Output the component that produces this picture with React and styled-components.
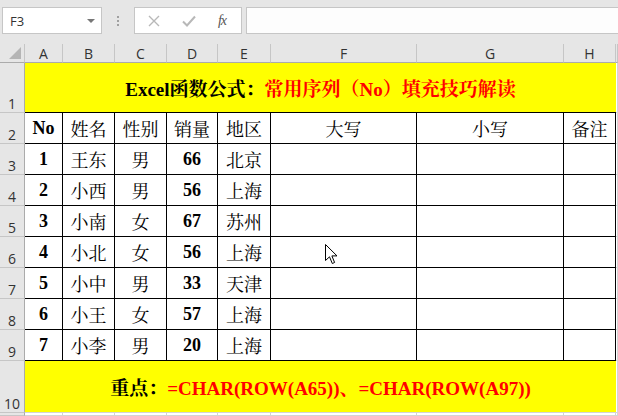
import React from "react";
import styled, { createGlobalStyle } from "styled-components";

const GlobalStyle = createGlobalStyle`
  html, body {
    margin: 0;
    padding: 0;
    background: #e6e6e6;
    overflow: hidden;
  }
`;

const SERIF = `"Liberation Serif", "Noto Serif CJK SC", "Noto Sans CJK SC", serif`;
const UI = `"Open Sans", "Noto Sans", "Liberation Sans", sans-serif`;

const Page = styled.div`
  position: relative;
  width: 618px;
  height: 416px;
  overflow: hidden;
  background: #e6e6e6;
`;

const Toolbar = styled.div`
  display: flex;
  align-items: flex-start;
  height: 44px;
  padding: 7px 0 0 2px;
  box-sizing: border-box;
`;

const NameBox = styled.div`
  width: 100px;
  height: 27px;
  box-sizing: border-box;
  background: #fff;
  border: 1px solid #c6c6c6;
  display: flex;
  align-items: center;
  justify-content: space-between;
  padding: 0 6px 0 7px;
  font-family: ${UI};
  font-size: 13px;
  color: #333;
`;

const DropArrow = styled.span`
  width: 0;
  height: 0;
  border-left: 4px solid transparent;
  border-right: 4px solid transparent;
  border-top: 4px solid #777;
`;

const Grip = styled.div`
  width: 32px;
  height: 27px;
  display: flex;
  flex-direction: column;
  align-items: center;
  justify-content: center;
  gap: 2px;

  span {
    width: 2px;
    height: 2px;
    background: #a0a0a0;
  }
`;

const FnBox = styled.div`
  width: 108px;
  height: 27px;
  box-sizing: border-box;
  background: #fff;
  border: 1px solid #c6c6c6;
  display: flex;
  align-items: center;
  justify-content: space-around;
  padding: 0 4px 0 2px;
`;

const FxText = styled.span`
  font-family: ${SERIF};
  font-style: italic;
  font-size: 14px;
  color: #555;
  letter-spacing: -1px;
`;

const FormulaInput = styled.div`
  flex: 1;
  height: 27px;
  margin-left: 4px;
  box-sizing: border-box;
  background: #fdfdfd;
  border: 1px solid #c6c6c6;
  border-right: none;
`;

const Sheet = styled.div`
  display: grid;
  grid-template-columns: 25px 38px 52px 52px 51px 53px 146px 147px 52px 1fr;
  grid-template-rows: 19px 50px repeat(8, 31px) 52px 1fr;
  height: 372px;
  background: #fff;
`;

const Corner = styled.div`
  background: #e6e6e6;
  border-right: 1px solid #c6c6c6;
  border-bottom: 1px solid #ababab;
  position: relative;

  &::after {
    content: "";
    position: absolute;
    right: 3px;
    bottom: 3px;
    width: 0;
    height: 0;
    border-left: 12px solid transparent;
    border-bottom: 12px solid #b5b5b5;
  }
`;

const ColHead = styled.div`
  background: #e6e6e6;
  border-right: 1px solid #c6c6c6;
  border-bottom: 1px solid #ababab;
  display: flex;
  align-items: flex-end;
  justify-content: center;
  font-family: ${UI};
  font-size: 14px;
  line-height: 17px;
  color: #333;
`;

const RowHead = styled.div`
  background: #e6e6e6;
  border-right: 1px solid #ababab;
  border-bottom: 1px solid #c6c6c6;
  display: flex;
  align-items: flex-end;
  justify-content: center;
  font-family: ${UI};
  font-size: 14px;
  line-height: 16px;
  color: #333;
`;

const Banner = styled.div`
  grid-column: 2 / 10;
  background: #ffff00;
  border-bottom: 1px solid ${(p) => (p.$closed ? "#000" : "#d4d4d4")};
  display: flex;
  align-items: center;
  justify-content: center;
  font-family: ${SERIF};
  font-weight: 700;
  font-size: 19px;
  color: #000;
  white-space: nowrap;
`;

const Red = styled.span`
  color: #ff0000;
`;

const Cell = styled.div`
  border-right: 1px solid #000;
  border-bottom: 1px solid #000;
  display: flex;
  align-items: center;
  justify-content: center;
  font-family: ${SERIF};
  font-size: 18px;
  font-weight: ${(p) => (p.$bold ? 700 : 400)};
  color: #000;
  white-space: nowrap;
`;

const Spare = styled.div`
  border-right: 1px solid #d4d4d4;
  border-bottom: 1px solid #d4d4d4;
  background: #fff;
`;

const Pointer = styled.svg`
  position: absolute;
  left: 325px;
  top: 244px;
`;

const letters = ["A", "B", "C", "D", "E", "F", "G", "H"];
const header = ["No", "姓名", "性别", "销量", "地区", "大写", "小写", "备注"];
const rows = [
  [1, "王东", "男", 66, "北京"],
  [2, "小西", "男", 56, "上海"],
  [3, "小南", "女", 67, "苏州"],
  [4, "小北", "女", 56, "上海"],
  [5, "小中", "男", 33, "天津"],
  [6, "小王", "女", 57, "上海"],
  [7, "小李", "男", 20, "上海"],
];

function App() {
  return (
    <Page>
      <GlobalStyle />
      <Toolbar>
        <NameBox>
          F3
          <DropArrow />
        </NameBox>
        <Grip>
          <span />
          <span />
          <span />
        </Grip>
        <FnBox>
          <svg width="12" height="12" viewBox="0 0 12 12">
            <path d="M1 1L11 11M11 1L1 11" stroke="#b8b8b8" strokeWidth="1.4" />
          </svg>
          <svg width="14" height="12" viewBox="0 0 14 12">
            <path d="M1 6.5L5 10.5L13 1.5" stroke="#b8b8b8" strokeWidth="2" fill="none" />
          </svg>
          <FxText>fx</FxText>
        </FnBox>
        <FormulaInput />
      </Toolbar>

      <Sheet>
        <Corner />
        {letters.map((l) => (
          <ColHead key={l}>{l}</ColHead>
        ))}
        <ColHead />

        <RowHead>1</RowHead>
        <Banner $closed>
          Excel函数公式：<Red>常用序列（No）填充技巧解读</Red>
        </Banner>
        <Spare />

        <RowHead>2</RowHead>
        {header.map((h) => (
          <Cell key={h} $bold={h === "No"}>
            {h}
          </Cell>
        ))}
        <Spare />

        {rows.map((r, i) => (
          <React.Fragment key={r[0]}>
            <RowHead>{i + 3}</RowHead>
            <Cell $bold>{r[0]}</Cell>
            <Cell>{r[1]}</Cell>
            <Cell>{r[2]}</Cell>
            <Cell $bold>{r[3]}</Cell>
            <Cell>{r[4]}</Cell>
            <Cell />
            <Cell />
            <Cell />
            <Spare />
          </React.Fragment>
        ))}

        <RowHead>10</RowHead>
        <Banner>
          重点：<Red>=CHAR(ROW(A65))、=CHAR(ROW(A97))</Red>
        </Banner>
        <Spare />

        <RowHead />
        {letters.map((l) => (
          <Spare key={l} />
        ))}
        <Spare />
      </Sheet>

      <Pointer width="13" height="21" viewBox="0 0 13 21">
        <path
          d="M0.5 0.5L0.5 16.5L4.5 12.8L7.3 19.5L9.6 18.5L6.9 11.9L12 11.9Z"
          fill="#fff"
          stroke="#000"
          strokeWidth="1"
          strokeLinejoin="round"
        />
      </Pointer>
    </Page>
  );
}

export default App;
